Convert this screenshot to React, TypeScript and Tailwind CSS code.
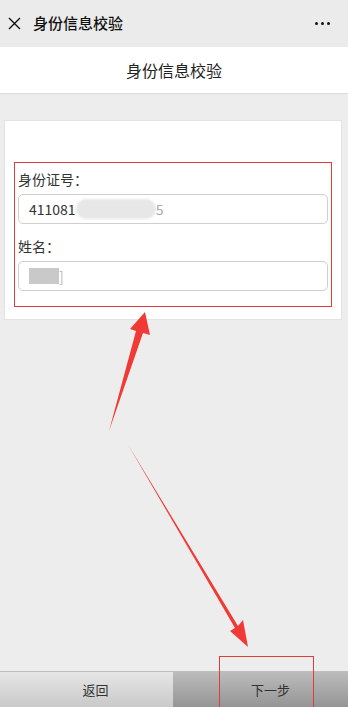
import React from "react";

const FONT = {
  fontFamily: '"Noto Sans CJK SC", "Noto Sans", "Liberation Sans", sans-serif',
};

// Red annotation arrows drawn over the page.
function Arrows() {
  return (
    <svg
      className="pointer-events-none absolute inset-0"
      width="348"
      height="707"
      viewBox="0 0 348 707"
    >
      {/* arrow pointing up to the form */}
      <polygon
        points="109,431 136,331 130,329 145,312 150,335 143,333"
        fill="#f23a35"
      />
      {/* arrow pointing down to the next button */}
      <polygon
        points="127,443 238,626 243,620 248,647 230,631 235,628"
        fill="#f23a35"
      />
    </svg>
  );
}

function Field({ label, children }: { label: string; children: React.ReactNode }) {
  return (
    <div>
      <div className="text-[14px] leading-[20px] text-[#333]">{label}</div>
      <div className="mt-[5px] flex h-[30px] items-center rounded-[5px] border border-[#cfcfcf] bg-white px-[10px] text-[14px] text-[#333]">
        {children}
      </div>
    </div>
  );
}

export default function App() {
  return (
    <div className="relative flex h-[707px] w-[348px] flex-col overflow-hidden bg-[#ededed]" style={FONT}>
      {/* top nav */}
      <div className="flex h-[47px] shrink-0 items-center bg-[#ebebeb] pl-[8px] pr-[18px]">
        <svg width="13" height="13" viewBox="0 0 13 13" className="shrink-0">
          <path d="M1 1 L12 12 M12 1 L1 12" stroke="#111" strokeWidth="1.4" />
        </svg>
        <span className="ml-[12px] text-[15px] font-medium text-[#111]">身份信息校验</span>
        <div className="ml-auto flex gap-[3px]">
          <span className="h-[3px] w-[3px] rounded-full bg-[#111]" />
          <span className="h-[3px] w-[3px] rounded-full bg-[#111]" />
          <span className="h-[3px] w-[3px] rounded-full bg-[#111]" />
        </div>
      </div>

      {/* page title */}
      <div className="flex h-[47px] shrink-0 items-center justify-center border-b border-[#dcdcdc] bg-white text-[16px] text-[#222]">
        身份信息校验
      </div>

      {/* body */}
      <div className="flex-1 px-[4px] pt-[26px] pr-[6px]">
        <div className="border border-[#e2e2e2] bg-white px-[9px] pt-[41px] pb-[12px]">
          <div className="flex flex-col gap-[12px] border border-[#e03c3c] px-[3px] pt-[6px] pb-[15px]">
            <Field label="身份证号：">
              <span>411081</span>
              <span className="h-[20px] w-[80px] rounded-full bg-[#e7e7e7] blur-[1px]" />
              <span className="text-[#aaa]">5</span>
            </Field>
            <Field label="姓名：">
              <span className="h-[16px] w-[30px] bg-[#c9c9c9] blur-[0.5px]" />
              <span className="text-[#bbb]">]</span>
            </Field>
          </div>
        </div>
      </div>

      {/* bottom buttons */}
      <div className="flex h-[36px] shrink-0 border-t border-[#bdbdbd] text-[13px] text-[#333]">
        <div className="flex w-[173px] items-center justify-center bg-gradient-to-b from-[#e6e6e6] to-[#c9c9c9] pl-[18px]">
          返回
        </div>
        <div className="flex flex-1 items-center justify-center bg-gradient-to-b from-[#bcbcbc] to-[#959595] pl-[20px]">
          下一步
        </div>
      </div>

      {/* annotation box over next button */}
      <div className="pointer-events-none absolute left-[219px] top-[656px] h-[52px] w-[95px] border border-[#e03c3c]" />

      <Arrows />
    </div>
  );
}
